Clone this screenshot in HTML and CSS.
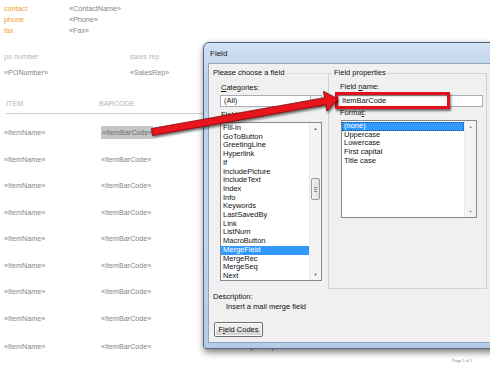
FILE: index.html
```html
<!DOCTYPE html>
<html lang="en">
<head>
    <meta charset="UTF-8">
    <title>Mail merge - Field</title>
    <link rel="stylesheet" href="styles.css">
</head>
<body>
    <!-- document behind the dialog -->
    <div class="doc">
        <div class="contact">
            <span class="lbl">contact</span><span>«ContactName»</span>
            <span class="lbl">phone</span><span>«Phone»</span>
            <span class="lbl">fax</span><span>«Fax»</span>
        </div>
        <div class="meta">
            <span class="muted">po number</span><span class="muted">sales rep</span>
            <span>«PONumber»</span><span>«SalesRep»</span>
        </div>
        <div class="items-head"><span>ITEM</span><span>BARCODE</span></div>
        <div class="items">
            <div class="item-row"><span>«ItemName»</span><span><span class="code">«ItemBarCode»</span></span></div>
            <div class="item-row"><span>«ItemName»</span><span>«ItemBarCode»</span></div>
            <div class="item-row"><span>«ItemName»</span><span>«ItemBarCode»</span></div>
            <div class="item-row"><span>«ItemName»</span><span>«ItemBarCode»</span></div>
            <div class="item-row"><span>«ItemName»</span><span>«ItemBarCode»</span></div>
            <div class="item-row"><span>«ItemName»</span><span>«ItemBarCode»</span></div>
            <div class="item-row"><span>«ItemName»</span><span>«ItemBarCode»</span></div>
            <div class="item-row"><span>«ItemName»</span><span>«ItemBarCode»</span></div>
            <div class="item-row last"><span>«ItemName»</span><span>«ItemBarCode»</span><span class="dark">«ItemQuantity»</span><span class="dark">«ItemUnitPrice»</span><span class="dark">«ItemTotal»</span></div>
        </div>
    </div>
    <div class="page-no">Page 1 of 1</div>

    <!-- Field dialog -->
    <div class="dialog">
        <div class="dlg-title">Field</div>
        <div class="dlg-body">
            <div class="groups">
                <fieldset class="grp grp-left">
                    <legend>Please choose a field</legend>
                    <div class="lab lab-cat"><u>C</u>ategories:</div>
                    <div class="combo"><span class="combo-val">(All)</span><span class="drop">&#9660;</span></div>
                    <div class="lab lab-names">Field <u>n</u>ames:</div>
                    <div class="list names">
                        <div class="opts">
                            <div>Fill-in</div>
                            <div>GoToButton</div>
                            <div>GreetingLine</div>
                            <div>Hyperlink</div>
                            <div>If</div>
                            <div>IncludePicture</div>
                            <div>IncludeText</div>
                            <div>Index</div>
                            <div>Info</div>
                            <div>Keywords</div>
                            <div>LastSavedBy</div>
                            <div>Link</div>
                            <div>ListNum</div>
                            <div>MacroButton</div>
                            <div class="sel">MergeField</div>
                            <div>MergeRec</div>
                            <div>MergeSeq</div>
                            <div>Next</div>
                        </div>
                        <div class="vscroll">
                            <span class="arr">&#9650;</span>
                            <span class="track"><span class="thumb"></span></span>
                            <span class="arr">&#9660;</span>
                        </div>
                    </div>
                </fieldset>
                <fieldset class="grp grp-right">
                    <legend>Field properties</legend>
                    <div class="lab lab-fname">Field <u>n</u>ame:</div>
                    <div class="textbox">ItemBarCode</div>
                    <div class="lab lab-format">Forma<u>t</u>:</div>
                    <div class="list formats">
                        <div class="opts">
                            <div class="sel focus">(none)</div>
                            <div>Uppercase</div>
                            <div>Lowercase</div>
                            <div>First capital</div>
                            <div>Title case</div>
                        </div>
                        <div class="vscroll off">
                            <span class="arr">&#9650;</span>
                            <span class="track"></span>
                            <span class="arr">&#9660;</span>
                        </div>
                    </div>
                </fieldset>
            </div>
            <div class="desc-lab">Description:</div>
            <div class="desc-text">Insert a mail merge field</div>
            <button class="btn">F<u>i</u>eld Codes</button>
        </div>
    </div>

    <!-- annotation: highlight + arrow -->
    <div class="callout"></div>
    <svg class="arrow" width="490" height="365" viewBox="0 0 490 365">
        <defs>
            <filter id="sh" x="-10%" y="-30%" width="120%" height="160%">
                <feDropShadow dx="1" dy="2" stdDeviation="1.2" flood-color="#000" flood-opacity="0.55"/>
            </filter>
        </defs>
        <polygon filter="url(#sh)" fill="#e8121c" stroke="#7a0a0a" stroke-width="0.8" stroke-linejoin="round"
            points="151.4,128.5 324.6,97.7 323.5,91.3 338,99 326.9,111.1 325.8,104.7 152.6,135.5"/>
    </svg>
</body>
</html>
```

FILE: styles.css
```css
body {
    margin: 0;
    width: 490px;
    height: 365px;
    overflow: hidden;
    position: relative;
    background: #fff;
    font-family: "Liberation Sans", Arial, sans-serif;
}

/* ---- document ---- */
.doc {
    padding: 3px 0 0 4px;
    font-size: 7.2px;
    color: #858585;
}
.contact {
    display: grid;
    grid-template-columns: 65px auto;
    line-height: 11px;
}
.lbl {
    color: #f0a22e;
}
.meta {
    display: grid;
    grid-template-columns: 126px auto;
    row-gap: 5px;
    line-height: 11px;
    margin-top: 15px;
}
.muted {
    color: #b4b4b4;
}
.items-head {
    display: grid;
    grid-template-columns: 93px auto;
    margin: 20px 0 0 2px;
    width: 260px;
    line-height: 11px;
    padding-bottom: 4px;
    border-bottom: 1px solid #cfcfcf;
    color: #b4b4b4;
}
.items {
    margin-top: 6px;
}
.item-row {
    display: grid;
    grid-template-columns: 97px 129px 142px 81px auto;
    height: 26.5px;
    line-height: 26.5px;
    white-space: nowrap;
}
.item-row.last {
    line-height: 30px;
}
.dark {
    color: #555;
}
.code {
    background: #c6c6c6;
    color: #6e6e6e;
    padding: 2px 1px;
}
.page-no {
    position: absolute;
    left: 452px;
    top: 358px;
    font-size: 4px;
    color: #888;
}

/* ---- dialog window ---- */
.dialog {
    position: absolute;
    left: 203px;
    top: 42px;
    width: 300px;
    height: 305px;
    border: 1px solid #55677e;
    border-radius: 6px 6px 3px 3px;
    background: linear-gradient(#d3e2f4, #bcd1ea 12%, #c2d6ee 60%, #b5cbe6);
    box-shadow: 1px 3px 7px rgba(0, 0, 0, 0.55);
    font-family: "Liberation Sans", Arial, sans-serif;
    font-size: 7.5px;
    color: #111;
}
.dlg-title {
    height: 20px;
    line-height: 22px;
    padding-left: 6px;
    font-size: 8px;
}
.dlg-body {
    margin: 0 0 0 4px;
    height: 278px;
    border: 1px solid #8ea5c2;
    background: #f0f0f0;
    line-height: 10px;
}
.groups {
    display: flex;
    height: 221px;
    padding: 4px 0 0 1px;
}
.grp {
    margin: 0;
    padding: 0;
    min-width: 0;
    border: 0;
}
.grp legend {
    padding: 0 2px;
    line-height: 10px;
}
.grp-left {
    width: 118px;
    border-top: 1px solid #d5dfe5;
}
.grp-left legend {
    margin-left: 1px;
}
.grp-right {
    width: 157px;
    border: 1px solid #cdd3d8;
}
.grp-right legend {
    margin-left: 3px;
}
.lab u, .btn u {
    text-decoration: underline;
}
.lab-cat {
    margin: 5px 0 0 11px;
}
.combo {
    display: flex;
    margin: 2px 0 0 10px;
    width: 100px;
    height: 10px;
    border: 1px solid #a9afb8;
    background: #fff;
}
.combo-val {
    flex: 1;
    padding-left: 3px;
    line-height: 10px;
}
.drop {
    width: 10px;
    font-size: 5px;
    text-align: center;
    line-height: 10px;
    background: linear-gradient(#f4f4f4, #dcdcdc);
    border-left: 1px solid #b8bcc2;
}
.lab-names {
    margin: 3px 0 0 11px;
}
.list {
    display: flex;
    border: 1px solid #848a93;
    background: #fff;
}
.names {
    margin: 2px 0 0 10px;
    width: 100px;
    height: 157px;
}
.opts {
    flex: 1;
    padding-top: 1px;
    line-height: 8.7px;
}
.opts div {
    padding-left: 2px;
    white-space: nowrap;
}
.opts .sel {
    background: #3399ff;
    color: #fff;
}
.opts .focus {
    outline: 1px dotted #0d4d99;
    outline-offset: -1px;
}
.vscroll {
    display: flex;
    flex-direction: column;
    width: 11px;
    background: #f4f4f4;
    border-left: 1px solid #ececec;
}
.arr {
    height: 11px;
    line-height: 11px;
    text-align: center;
    font-size: 4px;
    color: #555;
}
.off .arr {
    color: #8a8a8a;
}
.track {
    flex: 1;
}
.thumb {
    display: block;
    margin: 44px auto 0;
    width: 9px;
    height: 22px;
    border: 1px solid #9a9a9a;
    border-radius: 2px;
    box-sizing: border-box;
    background:
        linear-gradient(#8a8a8a, #8a8a8a) center 8px / 3px 1px no-repeat,
        linear-gradient(#8a8a8a, #8a8a8a) center 10px / 3px 1px no-repeat,
        linear-gradient(#8a8a8a, #8a8a8a) center 12px / 3px 1px no-repeat,
        linear-gradient(90deg, #f2f2f2, #dedede);
}
.lab-fname {
    margin: 4px 0 0 11px;
}
.textbox {
    margin: 3px 0 0 7px;
    width: 140px;
    height: 10px;
    padding-left: 5px;
    border: 1px solid #abb0b7;
    background: #fff;
    line-height: 10px;
}
.lab-format {
    margin: 1px 0 0 11px;
}
.formats {
    margin: 2px 0 0 12px;
    width: 134px;
    height: 96px;
}
.desc-lab {
    margin: 3px 0 0 4px;
}
.desc-text {
    margin-left: 17px;
}
.btn {
    display: block;
    margin: 10px 0 0 5px;
    width: 49px;
    height: 15px;
    padding: 0;
    border: 1px solid #707070;
    border-radius: 2px;
    background: linear-gradient(#f3f3f3, #e9e9e9 50%, #dcdcdc 51%, #d1d1d1);
    font-family: inherit;
    font-size: 7.5px;
    color: #111;
    box-shadow: inset 0 0 0 1px #fcfcfc;
}

/* ---- annotation overlay ---- */
.callout {
    position: absolute;
    left: 335px;
    top: 92px;
    width: 109px;
    height: 11px;
    border: 3px solid #e3101b;
    box-shadow: 1px 2px 2px rgba(0, 0, 0, 0.55), inset 1px 1px 2px rgba(0, 0, 0, 0.4);
}
.arrow {
    position: absolute;
    left: 0;
    top: 0;
    pointer-events: none;
}
```
